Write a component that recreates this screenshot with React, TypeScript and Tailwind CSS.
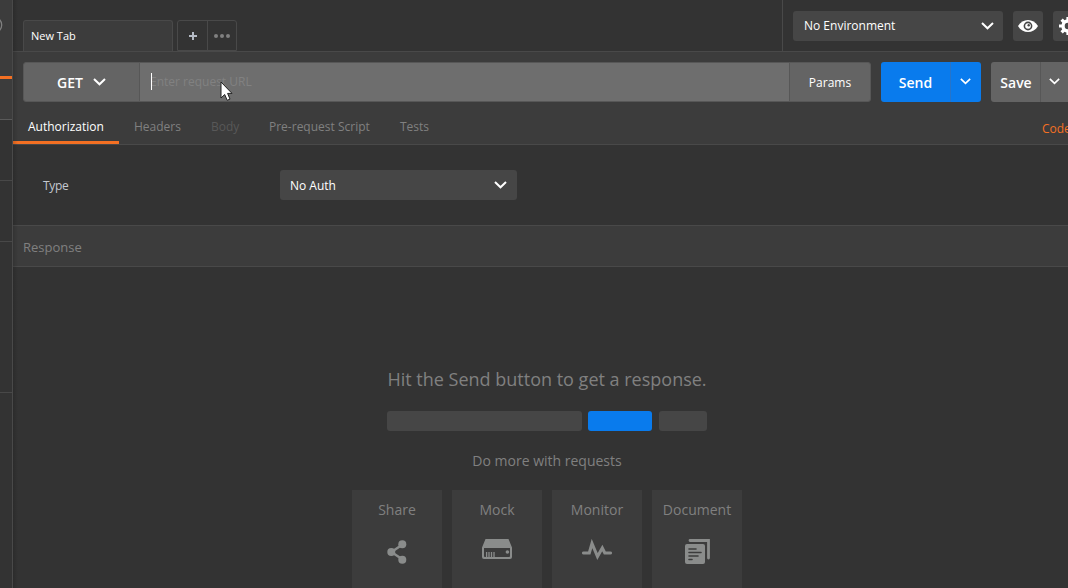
import React from "react";

function Chevron({ w = 13, h = 8, className = "" }: { w?: number; h?: number; className?: string }) {
  return (
    <svg width={w} height={h} viewBox="0 0 13 8" className={`shrink-0 ${className}`}>
      <path d="M1 1 L6.5 6.3 L12 1" fill="none" stroke="#fff" strokeWidth="2" />
    </svg>
  );
}

function Sidebar() {
  return (
    <aside className="relative flex w-[13px] shrink-0 flex-col overflow-hidden border-r border-[#494949] bg-[#333333]">
      <div className="h-[76px] bg-[#3c3c3c]" />
      <div className="h-[3px] bg-[#f47023]" />
      <div className="h-[41px] border-b border-[#5a5a5a] bg-[#3c3c3c]" />
      <div className="h-[61px] border-b border-[#484848]" />
      <div className="h-[61px] border-b border-[#484848]" />
      <div className="h-[151px] border-b border-[#484848]" />
      <svg className="absolute left-0 top-4" width="4" height="18" viewBox="0 0 4 18">
        <circle cx="-6.5" cy="9" r="8.2" fill="none" stroke="#808080" strokeWidth="1.3" />
      </svg>
    </aside>
  );
}

function Header() {
  return (
    <header className="flex h-[52px] border-b border-[#494949] bg-[#333333]">
      <div className="flex flex-1 items-start pl-[10px] pt-5">
        <div className="h-[31px] w-[150px] rounded-t-[3px] border border-b-0 border-[#494949] bg-[#3c3c3c] pl-[7px] text-[11px] leading-[29px] text-white">
          New Tab
        </div>
        <div className="ml-1 flex h-[31px] w-[60px] rounded-t-[3px] border border-[#494949]">
          <div className="flex w-[30px] items-center justify-center border-r border-[#494949]">
            <svg width="8" height="8" viewBox="0 0 8 8">
              <path d="M4 0V8M0 4H8" stroke="#b4bac4" strokeWidth="2" />
            </svg>
          </div>
          <div className="flex flex-1 items-center justify-center gap-[2px]">
            <i className="size-1 rounded-full bg-[#808080]" />
            <i className="size-1 rounded-full bg-[#808080]" />
            <i className="size-1 rounded-full bg-[#808080]" />
          </div>
        </div>
      </div>
      <div className="flex w-[286px] gap-[10px] overflow-hidden border-l border-[#494949] pl-[10px] pt-[11px]">
        <div className="flex h-[30px] w-[210px] shrink-0 items-center justify-between rounded-[3px] bg-[#464646] pl-[11px] pr-[9px] text-[12px] text-white">
          <span>No Environment</span>
          <Chevron />
        </div>
        <div className="flex size-[30px] shrink-0 items-center justify-center rounded-[3px] bg-[#464646]">
          <svg width="20" height="12" viewBox="0 0 20 12">
            <path d="M0 6C4.5-2 15.5-2 20 6C15.5 14 4.5 14 0 6Z" fill="#fff" />
            <circle cx="10" cy="6" r="4.4" fill="#464646" />
            <circle cx="10" cy="6" r="2.8" fill="#fff" />
            <circle cx="10.7" cy="5.3" r="1.2" fill="#464646" />
          </svg>
        </div>
        <div className="flex size-[30px] shrink-0 items-center justify-center rounded-[3px] bg-[#464646]">
          <svg width="18" height="18" viewBox="-9 -9 18 18">
            <circle r="5" fill="none" stroke="#fff" strokeWidth="3.4" />
            <path d="M0-9V-5M0 9V5M-9 0H-5M9 0H5M-6.4-6.4L-4-4M6.4 6.4L4 4M-6.4 6.4L-4 4M6.4-6.4L4-4" stroke="#fff" strokeWidth="3.2" />
          </svg>
        </div>
      </div>
    </header>
  );
}

function RequestBar() {
  return (
    <div className="flex h-[50px] shrink-0 overflow-hidden pl-[10px] pt-[10px] text-white">
      <div className="flex h-10 w-[848px] shrink-0 rounded-[3px] border border-[#575757] bg-[#646464]">
        <div className="flex w-[116px] items-center border-r border-[#575757] pl-[33px] text-[14px] font-semibold">
          <span className="w-[36px]">GET</span>
          <Chevron />
        </div>
        <div className="relative flex w-[650px] items-center border-r border-[#575757] bg-[#6e6e6e] pl-[10px]">
          <span className="text-[12px] text-[#818181]">Enter request URL</span>
          <i className="absolute left-[11px] top-[10px] h-[17px] w-px bg-white" />
          <svg className="absolute left-[80px] top-[18px]" width="13" height="21" viewBox="0 0 13 21">
            <path d="M1 1V17L4.7 13.5L7.2 19.3L10 18.1L7.6 12.4H12Z" fill="#fff" stroke="#222" strokeWidth="1" />
          </svg>
        </div>
        <div className="flex flex-1 items-center justify-center pt-[2px] text-[12px]">Params</div>
      </div>
      <div className="ml-[10px] flex h-10 w-[100px] shrink-0 rounded-[3px] bg-[#097bed] text-[14px] font-semibold">
        <div className="flex w-[70px] items-center justify-center border-r border-[#2774c9]">Send</div>
        <div className="flex w-[28px] items-center justify-center pb-px"><Chevron w={11} h={7} /></div>
      </div>
      <div className="ml-[10px] flex h-10 w-[80px] shrink-0 rounded-[3px] bg-[#646464] text-[14px] font-semibold">
        <div className="flex w-[50px] items-center justify-center border-r border-[#575757] pl-px">Save</div>
        <div className="flex w-[27px] items-center justify-center pb-px"><Chevron w={11} h={7} /></div>
      </div>
    </div>
  );
}

function Tabs() {
  return (
    <nav className="flex h-[43px] shrink-0 overflow-hidden whitespace-nowrap border-b border-[#494949] text-[12px] leading-[50px] text-[#808080]">
      <div className="h-[42px] w-[106px] border-b-[3px] border-[#f47023] pl-[15px] font-medium text-white">Authorization</div>
      <div className="w-[77px] pl-[15px]">Headers</div>
      <div className="w-[58px] pl-[15px] text-[#585858]">Body</div>
      <div className="w-[131px] pl-[15px]">Pre-request Script</div>
      <div className="pl-[15px]">Tests</div>
      <div className="ml-auto w-[26px] leading-[54px] text-[#f47023]">Code</div>
    </nav>
  );
}

function Card({ title, children }: { title: string; children: React.ReactNode }) {
  return (
    <div className="flex h-[98px] w-[90px] flex-col items-center bg-[#3c3c3c] text-[14px] leading-[40px] text-[#808080]">
      <span className="pl-px">{title}</span>
      <div className="flex h-[44px] w-full items-center justify-center">{children}</div>
    </div>
  );
}

function EmptyResponse() {
  return (
    <section className="flex flex-1 flex-col items-center overflow-hidden pr-[2px] pt-[99px] text-[#808080]">
      <div className="-mr-[14px] flex flex-col items-center">
        <div className="h-[26px] pl-px text-[18px] leading-[26px]">Hit the Send button to get a response.</div>
        <div className="mt-[19px] flex h-5">
          <i className="w-[195px] rounded-[3px] bg-[#464646]" />
          <i className="ml-[6px] w-[64px] rounded-[3px] bg-[#097bed]" />
          <i className="ml-[7px] w-[48px] rounded-[3px] bg-[#464646]" />
        </div>
        <div className="mt-5 pl-px text-[14px] leading-5">Do more with requests</div>
        <div className="mt-[19px] flex gap-[10px]">
          <Card title="Share">
            <svg width="20" height="24" viewBox="0 0 20 24">
              <path d="M15.5 4.5L4.5 12L15.5 19.5" fill="none" stroke="#8a8c8b" strokeWidth="2.4" />
              <circle cx="15.3" cy="4.3" r="4" fill="#8a8c8b" />
              <circle cx="4.3" cy="12" r="4" fill="#8a8c8b" />
              <circle cx="15.3" cy="19.7" r="4" fill="#8a8c8b" />
            </svg>
          </Card>
          <Card title="Mock">
            <svg width="30" height="20" viewBox="0 0 30 20" className="-mt-[6px]">
              <path d="M3.5 0H26.5L30 8.5V18Q30 20 28 20H2Q0 20 0 18V8.5ZM2 9V17.2Q2 18 3 18H27Q28 18 28 17.2V9Z" fill="#8a8c8b" fillRule="evenodd" />
              <path d="M4.6 13V18M7 13V18M9.5 13V18M12 13V18" stroke="#8a8c8b" strokeWidth="1.3" />
              <circle cx="25.4" cy="13" r="1.8" fill="#8a8c8b" />
            </svg>
          </Card>
          <Card title="Monitor">
            <svg width="30" height="22" viewBox="0 0 30 22" className="-mt-[5px]">
              <path d="M1.5 14H7.3L10 4.5L15.5 17.5L20.3 9L22.8 14H28.5" fill="none" stroke="#8a8c8b" strokeWidth="3.1" strokeLinecap="round" />
            </svg>
          </Card>
          <Card title="Document">
            <svg width="26" height="26" viewBox="0 0 26 26" className="-mt-[1px] ml-[2px]">
              <path d="M5 1.5H23.5V19" fill="none" stroke="#8a8c8b" strokeWidth="2.8" strokeLinecap="round" />
              <rect x="0" y="5" width="20" height="20" rx="2" fill="#8a8c8b" />
              <path d="M4 10H11M4 13.5H16M4 17H13M4 20.5H7" stroke="#3c3c3c" strokeWidth="1.6" strokeLinecap="round" />
            </svg>
          </Card>
        </div>
      </div>
    </section>
  );
}

export default function App() {
  return (
    <div className="flex h-[588px] w-[1068px] overflow-hidden bg-[#333333] font-['Open_Sans',sans-serif]">
      <Sidebar />
      <main className="relative flex min-w-0 flex-1 flex-col">
        <Header />
        <div className="flex h-[93px] shrink-0 flex-col bg-[#3c3c3c]">
          <RequestBar />
          <Tabs />
        </div>
        <div className="flex h-20 shrink-0 pt-[25px] text-[12px] leading-[31px]">
          <div className="w-[267px] pl-[30px] tracking-[-0.3px] text-[#c3c8d0]">Type</div>
          <div className="flex h-[30px] w-[237px] items-center justify-between rounded-[3px] bg-[#464646] pl-[10px] pr-[10px] font-medium text-white">
            <span>No Auth</span>
            <Chevron />
          </div>
        </div>
        <div className="h-[42px] shrink-0 border-y border-[#494949] bg-[#3c3c3c] pl-[10px] text-[13px] leading-[42px] text-[#808080]">Response</div>
        <EmptyResponse />
        <div className="pointer-events-none absolute inset-y-0 left-0 w-[5px] bg-gradient-to-r from-black/15 to-transparent" />
      </main>
    </div>
  );
}
